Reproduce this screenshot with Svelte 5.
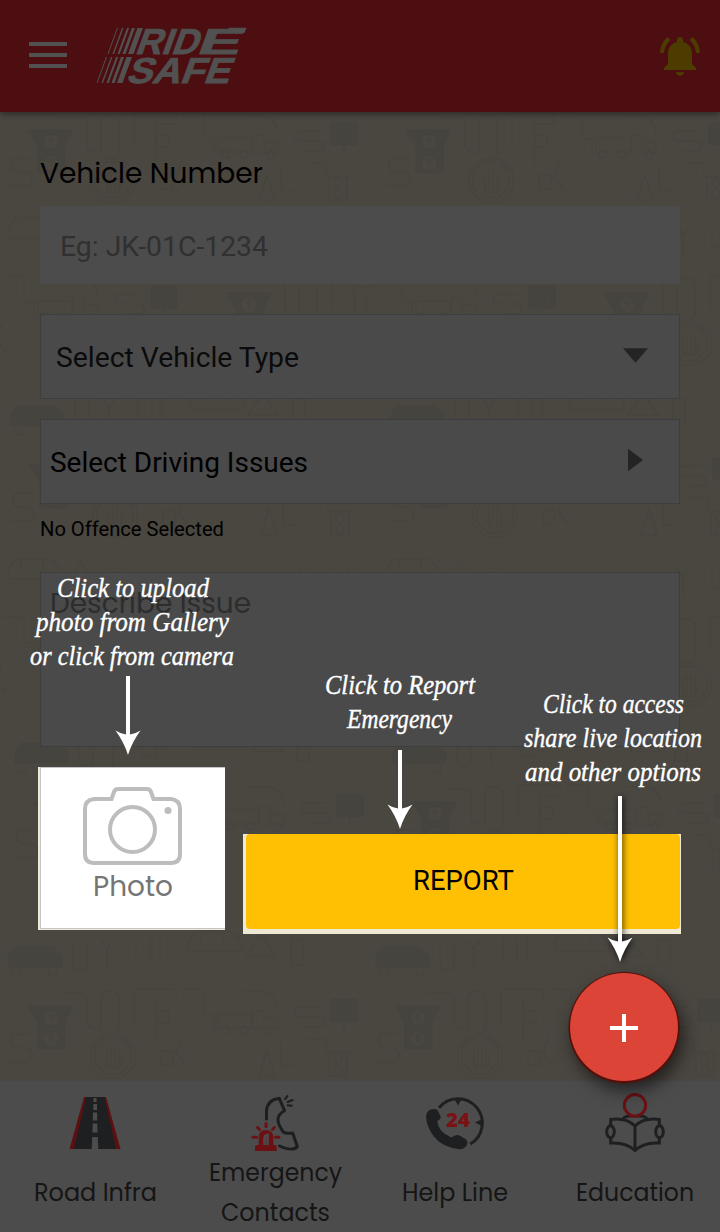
<script>
  const rows = [
    [31, 130], [409, 130], [-149, 293], [229, 293], [607, 293],
    [33, 465], [413, 465], [-149, 634], [229, 634], [607, 634],
    [37, 802], [415, 802], [31, 1006], [398, 1006]
  ];
  const notes = [
    ['Click to upload', 57, 152, 597],
    ['photo from Gallery', 36, 193, 631],
    ['or click from camera', 30, 204, 665],
    ['Click to Report', 325, 150, 694],
    ['Emergency', 347, 105, 728],
    ['Click to access', 543, 141, 713],
    ['share live location', 524, 178, 747],
    ['and other options', 525, 176, 781]
  ];
  const stripes = [[0, 1], [5, 1.5], [10, 2.2], [15, 3], [20.5, 5.5]];
</script>

{#snippet line(label, width, height, base, cls)}
  <svg class={'line ' + cls} {width} {height}>
    <text x="0" y={base} textLength={width} lengthAdjust="spacingAndGlyphs">{label}</text>
  </svg>
{/snippet}

{#snippet arrow(x, top, tip)}
  <path d={`M${x - 2} ${top}H${x + 2}V${tip - 20.5}Q${x + 7} ${tip - 21} ${x + 12.5} ${tip - 24.5}Q${x + 4} ${tip - 13} ${x} ${tip}Q${x - 4} ${tip - 13} ${x - 12.5} ${tip - 24.5}Q${x - 7} ${tip - 21} ${x - 2} ${tip - 20.5}Z`} />
{/snippet}

<div class="screen">
  <svg class="doodles" width="720" height="1080" viewBox="0 0 720 1080">
    <defs>
      <g id="street">
        <path class="solid" d="M-3 0H42L34 16V43H7V16Z" />
        <circle class="hole" cx="20" cy="12" r="8" /><circle class="hole" cx="20" cy="33" r="8" />
        <path d="M17 11l3-4 3 4M20 7v9M17 32l3-4 3 4M20 28v9" />
        <path d="M73 29h18l13 13v17l-13 13h-18l-13-13v-17z" />
        <path d="M75 32h14l11 11v14l-11 11h-14l-11-11v-14zM76 61V43m4 17V40m4 20V40m4 20V43M74 50l4 12h10l4-12" />
        <path d="M187 8h34v14h-34zM222 5h11v17h-11zM233 12h14v11h-14z" />
        <circle cx="194" cy="24" r="4" /><circle cx="213" cy="24" r="4" /><circle cx="240" cy="25" r="4" />
        <rect class="solid" x="300" y="-7" width="26" height="22" rx="3" />
        <path class="cut" d="M304 10l5-11M311 10l5-11M320 10l-3-10" /><path d="M313 15v10" />
        <path d="M290 1h-20q-6 0-6 5t6 5h18q5 0 5 5t-5 5h-15" />
        <path d="M0 28h-14q-6 0-6 7t6 7h8q7 0 7 7t-7 7h-18" />
        <path d="M29-13h20q7 0 7 7v19q0 9 8 9h6v-29q0-8 9-8t9 8v27q0 7-8 7" />
        <path d="M103 18V-17h42v11h-20v42M126 5h12v12h-12zM152-17h21v26h10v17M130 45v14h12v-14zM151 31l-6 16 10 12" />
        <path d="M211-15h18q15 0 18 18M250 35v25h14M275 33h20v14h25M228 70l8-26 8 26z" />
        <rect x="298" y="46" width="18" height="24" /><circle cx="307" cy="53" r="4" /><circle cx="307" cy="64" r="4" />
        <path class="solid" d="M-22-50l6-9h38l9 9v11h-53z" /><path d="M-19-37v7h8v-7M18-37v7h8v-7" />
        <path d="M157-64l8-11h34l12 11v9h-54zM170-74v10M192-74v10" /><path d="M105-68v22h14v-22M129-70v24M215-50l15-22 15 22zM260-66v25h12v-25z" />
        <path d="M42-65v22q0 7 7 7t7-7v-22M70-66l6 10 6-10M76-56v20" />
      </g>
    </defs>
    {#each rows as [x, y]}
      <use href="#street" {x} {y} />
    {/each}
  </svg>

  <header>
    <svg class="menu" width="38" height="27" viewBox="0 0 38 27"><path d="M0 2h38M0 13h38M0 24h38" /></svg>
    <svg class="logo" width="152" height="60" viewBox="0 0 152 60">
      <g transform="translate(11.5 29) skewX(-20)">
        {#each stripes as [x, w]}<rect {x} y="-26" width={w} height="26" />{/each}
        <text x="27" y="0" textLength="62" lengthAdjust="spacingAndGlyphs">RID</text>
        <text x="88" y="0" textLength="43" lengthAdjust="spacingAndGlyphs">E</text>
        <rect x="112" y="-26.200" width="17.500" height="5" />
      </g>
      <g transform="translate(.5 58) skewX(-20)">
        {#each stripes as [x, w]}<rect {x} y="-26" width={w} height="26" />{/each}
        <text x="29" y="0" textLength="103" lengthAdjust="spacingAndGlyphs">SAFE</text>
      </g>
    </svg>
    <svg class="bell" width="40" height="40" viewBox="0 0 40 40">
      <path d="M17 5V3a3 3 0 0 1 6 0v2c6 1.500 9 6 9 12v10l4 4v2H4v-2l4-4V17C8 11 11 6.500 17 5ZM16 35h8c0 5-8 5-8 0ZM0 16C.2 10 3 4 7.500 0L10.500 3C7 6 4.200 11 4 16ZM40 16C39.800 10 37 4 32.500 0L29.500 3C33 6 35.800 11 36 16Z" />
    </svg>
  </header>

  <main>
    <div class="label">{@render line('Vehicle Number', 223, 36, 27, 'geo black s28')}</div>
    <div class="field number">{@render line('Eg: JK-01C-1234', 208, 36, 28, 'rob hint s28')}</div>
    <div class="field select type">
      {@render line('Select Vehicle Type', 243, 36, 28, 'rob dark s28')}
      <svg width="25" height="15" viewBox="0 0 26 15"><path fill="#242424" d="M0 0h26L13 15z" /></svg>
    </div>
    <div class="field select issues">
      {@render line('Select Driving Issues', 258, 36, 28, 'rob black s28')}
      <svg width="15" height="24" viewBox="0 0 16 24"><path fill="#242424" d="M0 0l16 12L0 24z" /></svg>
    </div>
    <div class="offence">{@render line('No Offence Selected', 184, 26, 20, 'rob black s20')}</div>
    <div class="field describe">{@render line('Describe Issue', 201, 36, 28, 'geo ghost s28')}</div>
    <div class="actions">
      <div class="photo">
        <div class="photo-card">
          <svg width="100" height="80" viewBox="0 0 100 80" fill="none" stroke="#bdbdbd" stroke-width="4">
            <path d="M10 12H28.500L31 5Q32 2 35 2H64Q67 2 68 5L70.500 12H88Q97 13 97 22V67Q97 76 88 76H11Q2 76 2 67V22Q2 13 11 12" />
            <circle cx="49.500" cy="42.500" r="22.500" /><circle cx="85" cy="23.500" r="3.500" fill="#bdbdbd" stroke="none" />
          </svg>
          {@render line('Photo', 80, 34, 29, 'geo grey s28')}
        </div>
      </div>
      <div class="report"><div class="report-button">{@render line('REPORT', 101, 36, 28, 'rob black s28')}</div></div>
    </div>
  </main>

  <nav>
    <div class="item">
      <svg width="80" height="60" viewBox="0 0 80 60">
        <path fill="#5c1012" d="M29 5H51L65.500 57H14.500Z" /><path fill="#1e1f21" d="M31 5H49.500L61 57H19Z" />
        <path fill="#4c4c4c" d="M38.500 6h3v4h-3zM38.500 12h3.500v6h-3.800zM38 20.500h4.200v8H37.800zM37.700 31.500h4.600l.3 9h-5.200zM37.200 45h5.600l.5 12h-6.600z" />
      </svg>
      {@render line('Road Infra', 123, 30, 22, 'geo nav s24')}
    </div>
    <div class="item two">
      <svg width="80" height="60" viewBox="0 0 80 60" fill="none" stroke="#1d1e20" stroke-width="3" stroke-linecap="round" stroke-linejoin="round">
        <path d="M31.500 27V19Q32 8 44.300 6.300L49.500 18.700Q43.300 22 43 27Q42.500 32 48.300 40Q51 42 57.700 41L62.300 54.500Q58 60 44.500 54" />
        <path stroke-width="2" d="M50 7L52.500 4M52.700 10L57.700 8M52.700 13.300L56.700 13.700" />
        <path stroke="#6b1013" d="M31 31.500v3M22.500 35.500l2 2M39.500 35.500l-2 2M18 45.300h3.500M40.500 45.300h3.500" />
        <path fill="#6b1013" stroke="none" d="M22 53h1.700V45Q24 38 31 38T38.300 45v8H40q1.700 0 1.700 2v4H20v-4q0-2 2-2Z" /><path stroke="#4c4c4c" stroke-linecap="butt" stroke-width="2.500" d="M29.500 53V46Q29.500 43.500 32.500 43V53" stroke-linejoin="miter" />
      </svg>
      {@render line('Emergency', 133, 40, 25, 'geo nav s24')}
      {@render line('Contacts', 109, 40, 25, 'geo nav s24')}
    </div>
    <div class="item">
      <svg width="80" height="60" viewBox="0 0 80 60">
        <path fill="none" stroke="#1e1f21" stroke-width="3" d="M24 15.900A24.300 24.300 0 1 1 55.300 52" />
        <path fill="#1e1f21" d="M39.500 7h7L43 13.500zM67 27v7l-7-3.500zM11 25Q11 19 16.700 17.300Q22 16 23 19L25.700 24.500Q26 27 22.300 29Q23 40 36.500 45.500Q40 42 44 43.200L50.500 47Q53.500 49 52 53Q49 58 43 57Q19 54 12 31Z" />
        <text class="day" x="31" y="34.700" textLength="24" lengthAdjust="spacingAndGlyphs">24</text>
      </svg>
      {@render line('Help Line', 106, 30, 22, 'geo nav s24')}
    </div>
    <div class="item">
      <svg width="80" height="60" viewBox="0 0 80 60" fill="none" stroke="#1e1f21" stroke-width="3">
        <path d="M28 27Q30 24 35 24H45Q50 24 52 27" /><circle cx="40" cy="13.300" r="10.700" fill="#4c4c4c" stroke="#6b1013" />
        <path d="M15.700 33V27.500Q31 25.500 40 34Q49 25.500 64.300 27.500V33M15.700 46V51Q31 50 40 58.500Q49 50 64.300 51V46M40 34V58" />
        <ellipse cx="15.500" cy="39.700" rx="3.800" ry="6" /><ellipse cx="64.500" cy="39.700" rx="3.800" ry="6" />
      </svg>
      {@render line('Education', 118, 30, 22, 'geo nav s24')}
    </div>
  </nav>

  <div class="fab"><svg width="28" height="28" viewBox="0 0 28 28"><path d="M14 0V28M0 14H28" stroke="#fff" stroke-width="4" /></svg></div>

  <svg class="guide" width="720" height="1232" viewBox="0 0 720 1232">
    {#each notes as [label, x, w, y]}
      <text {x} {y} textLength={w} lengthAdjust="spacingAndGlyphs">{label}</text>
    {/each}
    {@render arrow(128, 676, 755)}
    {@render arrow(400, 750, 829)}
    <g class="raised">{@render arrow(620, 796, 962)}</g>
  </svg>
</div>

<style>
  :global(body) { margin: 0; }
  .screen { position: relative; width: 720px; height: 1232px; overflow: hidden; display: flex; flex-direction: column; background: #4a4640; }
  svg { display: block; flex: none; }
  .doodles { position: absolute; left: 0; top: 0; fill: none; stroke: #45433e; stroke-width: 1.5; opacity: .5; }
  .doodles .solid { fill: #41433f; }
  .doodles .hole { fill: #4a4640; }
  .doodles .cut { stroke: #4a4640; }
  header { position: relative; box-sizing: border-box; height: 112px; flex: none; display: flex; align-items: flex-start; background: #4c0e10; box-shadow: 0 2px 6px rgba(0, 0, 0, .4); padding: 0 20px 0 29px; }
  .menu { margin-top: 42px; fill: none; stroke: #515151; stroke-width: 4; }
  .logo { margin: 25px 0 0 29px; fill: #515151; overflow: visible; }
  .logo text { font: bold 36px "Liberation Sans", Arial, sans-serif; stroke: #515151; stroke-width: .8; }
  .bell { margin: 37px 0 0 auto; fill: #4c3c00; }
  main { position: relative; flex: 1; display: flex; flex-direction: column; padding: 0 40px; }
  .line { overflow: visible; }
  .geo { font-family: Poppins, Inter, sans-serif; font-feature-settings: "cv11"; }
  .rob { font-family: Roboto, sans-serif; }
  .s28 { font-size: 28px; }
  .geo.s28 { font-size: 28.5px; }
  .s24 { font-size: 24.5px; }
  .s20 { font-size: 20px; }
  .black { fill: #000; }
  .dark { fill: #0b0b0b; }
  .hint { fill: #303030; }
  .ghost { fill: #2d2d2d; }
  .grey { fill: #757575; }
  .nav { fill: #151515; }
  .label { height: 50px; padding-top: 44px; }
  .field { box-sizing: border-box; flex: none; background: #4a4a4a; display: flex; align-items: flex-start; }
  .number { height: 78px; padding: 22px 20px; background: #4c4c4c; }
  .select { height: 85px; border: 1px solid #3c3e3f; justify-content: space-between; }
  .type { margin-top: 30px; padding: 24px 31px 0 15px; }
  .type > svg:last-child { margin-top: 9px; }
  .issues { margin-top: 20px; padding: 24px 36px 0 9px; }
  .issues > svg:last-child { margin-top: 4px; }
  .offence { height: 56px; padding-top: 12px; }
  .describe { height: 175px; border: 1px solid #3c3e3f; padding: 12px 9px; }
  .actions { margin: 20px -1px 0 -2px; display: flex; justify-content: space-between; align-items: flex-start; }
  .photo { box-sizing: border-box; width: 187px; height: 163px; padding: 0 0 1px 2px; background: #eee8d5; }
  .photo-card { box-sizing: border-box; height: 162px; border: 1px solid #c3c5c9; border-right: 0; background: #fff; padding: 19px 0 0 42px; }
  .photo-card .line { margin: 0 0 0 10px; }
  .report { box-sizing: border-box; width: 438px; height: 100px; margin-top: 67px; background: #eee8d5; padding: 0 1px 5px 3px; }
  .report-button { height: 95px; border-radius: 4px; background: #ffc003; display: flex; justify-content: center; padding-top: 28px; box-sizing: border-box; }
  nav { position: relative; height: 152px; flex: none; display: grid; grid-template-columns: repeat(4, 180px); padding-left: 5px; background: #4c4c4c; box-shadow: inset 0 1px #4a4843; }
  .item { display: flex; flex-direction: column; align-items: center; padding-top: 12px; gap: 27px; }
  .two { gap: 0; }
  .two .line:nth-child(2) { margin-top: 4px; }
  .day { font: 800 19px "Open Sans", sans-serif; fill: #7a1215; }
  .fab { position: absolute; left: 570px; top: 973px; width: 108px; height: 108px; box-sizing: border-box; padding-top: 2px; border-radius: 50%; background: #db4437; display: flex; align-items: center; justify-content: center; box-shadow: 0 0 0 1px #54110c, 0 1px 0 1.500px #54110c, 4px 9px 18px rgba(0, 0, 0, .6); }
  .guide { position: absolute; left: 0; top: 0; fill: #fff; pointer-events: none; }
  .guide text { font: italic 28px "Lucida Calligraphy", "Liberation Serif", serif; stroke: #fff; stroke-width: .4; }
  .raised { filter: drop-shadow(1px 1px 3px rgba(0, 0, 0, .8)); }
</style>
